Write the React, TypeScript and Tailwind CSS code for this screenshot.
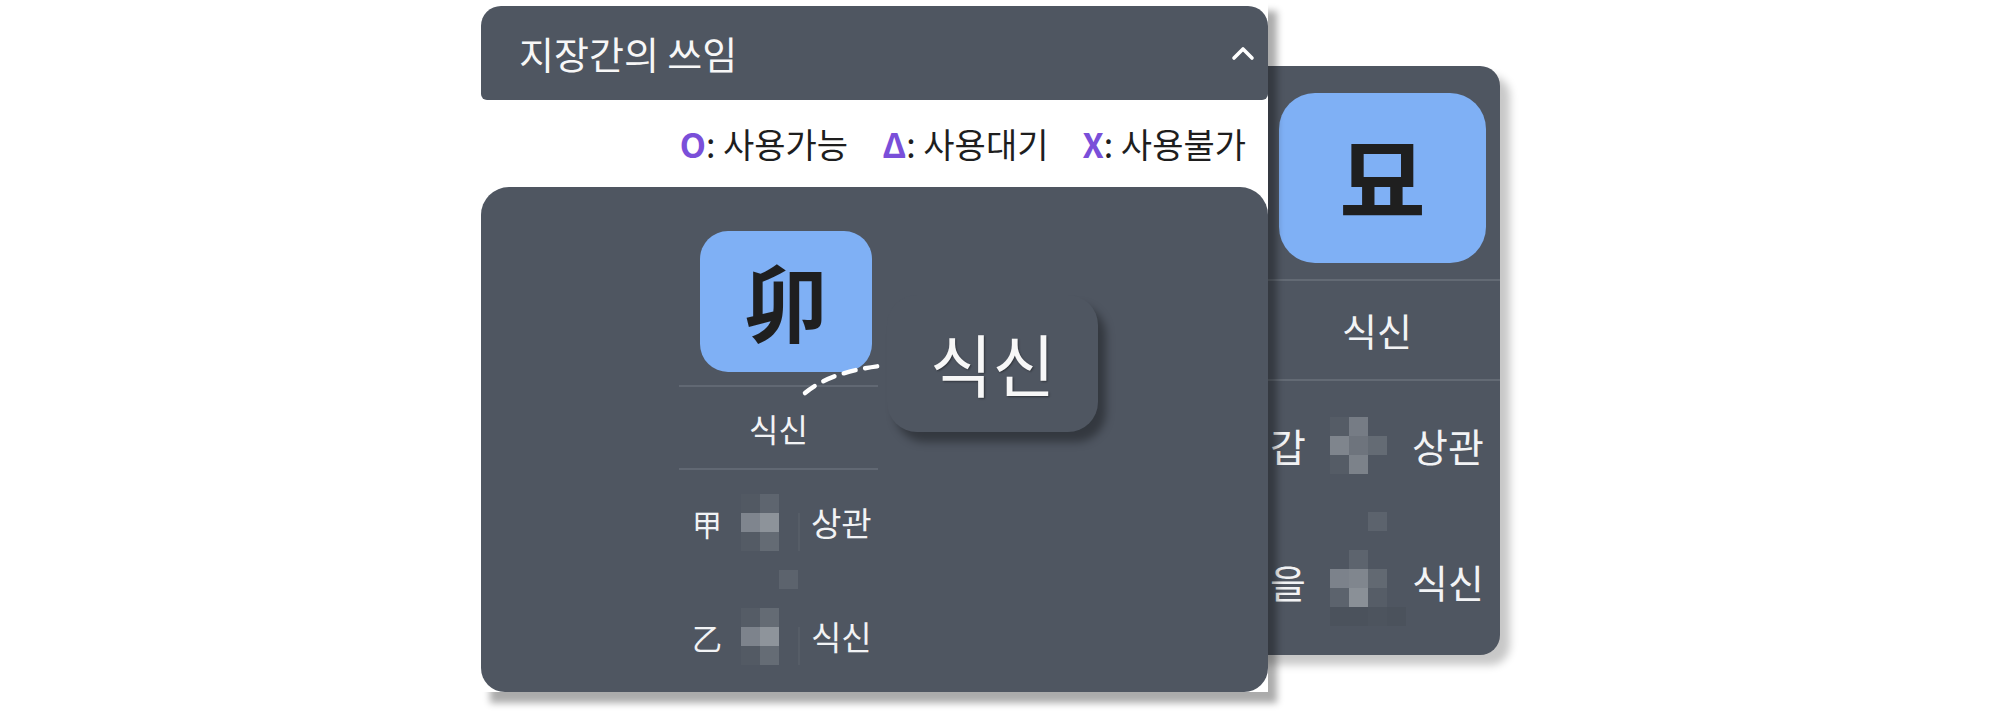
import React from "react";

const FONT = '"Noto Sans CJK KR", "Noto Sans", "Liberation Sans", sans-serif';

type Cell = string | null;

function Blob({ cells, size = 19 }: { cells: Cell[][]; size?: number }) {
  return (
    <div className="flex flex-col shrink-0">
      {cells.map((row, i) => (
        <div key={i} className="flex">
          {row.map((c, j) => (
            <div key={j} style={{ width: size, height: size, background: c ?? "transparent" }} />
          ))}
        </div>
      ))}
    </div>
  );
}

function ChevronUp() {
  return (
    <svg width="24" height="16" viewBox="0 0 24 16" className="block">
      <path d="M3 13 L12 4 L21 13" fill="none" stroke="#ffffff" strokeWidth="3.6" strokeLinecap="round" strokeLinejoin="round" />
    </svg>
  );
}

export default function App() {
  return (
    <div className="relative w-[2000px] h-[711px] bg-white overflow-hidden" style={{ fontFamily: FONT }}>
      {/* zoomed right panel (behind the phone screenshot) */}
      <div className="absolute left-[1150px] top-[66px] w-[350px] h-[589px] rounded-[20px] bg-[#4f5661] shadow-[10px_10px_8px_rgba(0,0,0,0.22)] flex flex-col">
        <div className="mt-[27px] ml-[129px] w-[207px] h-[170px] rounded-[36px] bg-[#7fb0f5] flex items-center justify-center">
          <span className="text-[94px] font-bold leading-none text-[#1f1f1f] -mt-[4px]">묘</span>
        </div>
        <div className="mt-[16px] h-[2px] bg-[#636a74]" />
        <div className="h-[98px] flex items-center pl-[192px]">
          <span className="text-[38px] leading-none text-[#f2f3f5]">식신</span>
        </div>
        <div className="h-[2px] bg-[#636a74]" />
        <div className="mt-[36px] flex items-center h-[57px] pl-[120px]">
          <span className="w-[60px] text-[39px] leading-none text-[#f2f3f5]">갑</span>
          <Blob
            cells={[
              ["#555c66", "#767c85", null],
              ["#7f858d", "#6e747d", "#646b74"],
              ["#555c66", "#7c828a", null],
            ]}
          />
          <span className="ml-[25px] text-[39px] leading-none text-[#f2f3f5]">상관</span>
        </div>
        <div className="mt-[38px] ml-[218px] w-[19px] h-[19px] bg-[#5c636d]" />
        <div className="mt-[19px] flex items-start pl-[120px]">
          <span className="w-[60px] h-[57px] mt-[3px] flex items-center text-[39px] leading-none text-[#f2f3f5]">을</span>
          <Blob
            cells={[
              [null, "#5d646e", null, null],
              ["#7c828b", "#80868e", "#626972", null],
              ["#5c636d", "#8a9097", "#565d67", null],
              ["#4b525c", "#4b525c", "#4d545e", "#4b525c"],
            ]}
          />
          <span className="ml-[6px] h-[57px] mt-[3px] flex items-center text-[39px] leading-none text-[#f2f3f5]">식신</span>
        </div>
      </div>

      {/* phone screenshot */}
      <div className="relative z-10 ml-[481px] w-[787px] h-[692px] bg-white shadow-[9px_11px_7px_rgba(0,0,0,0.33)] flex flex-col pt-[6px]">
        <div className="h-[94px] rounded-t-[20px] rounded-b-[6px] bg-[#4f5661] flex items-center justify-between pl-[38px] pr-[13px]">
          <span className="text-[38px] leading-none text-[#f7f7f7]">지장간의 쓰임</span>
          <ChevronUp />
        </div>
        <div className="h-[87px] flex items-center justify-end pr-[22px] text-[34px] leading-none text-[#1e1e1e]">
          <span>
            <span className="font-bold text-[#7a4fd9]">O</span>
            <span>: 사용가능</span>
          </span>
          <span className="ml-[34px]">
            <span className="font-bold text-[#7a4fd9]">Δ</span>
            <span>: 사용대기</span>
          </span>
          <span className="ml-[34px]">
            <span className="font-bold text-[#7a4fd9]">X</span>
            <span>: 사용불가</span>
          </span>
        </div>
        <div className="flex-1 rounded-t-[28px] rounded-b-[24px] bg-[#4f5661] pl-[198px] pt-[44px]">
          <div className="w-[199px] flex flex-col">
            <div className="ml-[21px] w-[172px] h-[141px] rounded-[28px] bg-[#7fb0f5] flex items-center justify-center">
              <span className="text-[84px] font-bold leading-none text-[#1f1f1f] -mt-[4px]">卯</span>
            </div>
            <div className="mt-[13px] h-[2px] bg-[#616873]" />
            <div className="h-[81px] flex items-center justify-center">
              <span className="text-[32px] leading-none text-[#f2f3f5]">식신</span>
            </div>
            <div className="h-[2px] bg-[#616873]" />
            <div className="mt-[24px] flex items-center h-[57px] pl-[13px]">
              <span className="w-[49px] text-[30px] leading-none text-[#f2f3f5]">甲</span>
              <Blob
                cells={[
                  ["#525963", "#5e656f"],
                  ["#7f858e", "#8d939a"],
                  ["#545b65", "#646b74"],
                ]}
              />
              <div className="ml-[19px] w-[2px] h-[38px] self-end bg-[#565d67]" />
              <span className="ml-[11px] text-[33px] leading-none text-[#f2f3f5]">상관</span>
            </div>
            <div className="mt-[19px] ml-[100px] w-[19px] h-[19px] bg-[#5c636d]" />
            <div className="mt-[19px] flex items-center h-[57px] pl-[13px]">
              <span className="w-[49px] text-[30px] leading-none text-[#f2f3f5]">乙</span>
              <Blob
                cells={[
                  ["#555c66", "#646b74"],
                  ["#7d838c", "#8e949b"],
                  ["#535a64", "#656c75"],
                ]}
              />
              <div className="ml-[19px] w-[2px] h-[38px] self-end bg-[#565d67]" />
              <span className="ml-[11px] text-[33px] leading-none text-[#f2f3f5]">식신</span>
            </div>
          </div>
        </div>
      </div>

      {/* dashed connector */}
      <svg className="absolute left-[795px] top-[356px] z-20" width="95" height="45" viewBox="795 356 95 45">
        <path d="M805 393 Q830 372 880 366" fill="none" stroke="#ffffff" strokeWidth="4.5" strokeLinecap="round" strokeDasharray="12 10" />
      </svg>

      {/* zoomed callout */}
      <div className="absolute z-20 left-[887px] top-[295px] w-[211px] h-[137px] rounded-[30px] bg-[#4f5661] shadow-[8px_10px_8px_rgba(0,0,0,0.35)] flex items-center justify-center">
        <span className="text-[68px] leading-none text-[#f7f7f7] -mt-[2px] [text-shadow:1px_1px_2px_rgba(0,0,0,0.4)]">식신</span>
      </div>
    </div>
  );
}
